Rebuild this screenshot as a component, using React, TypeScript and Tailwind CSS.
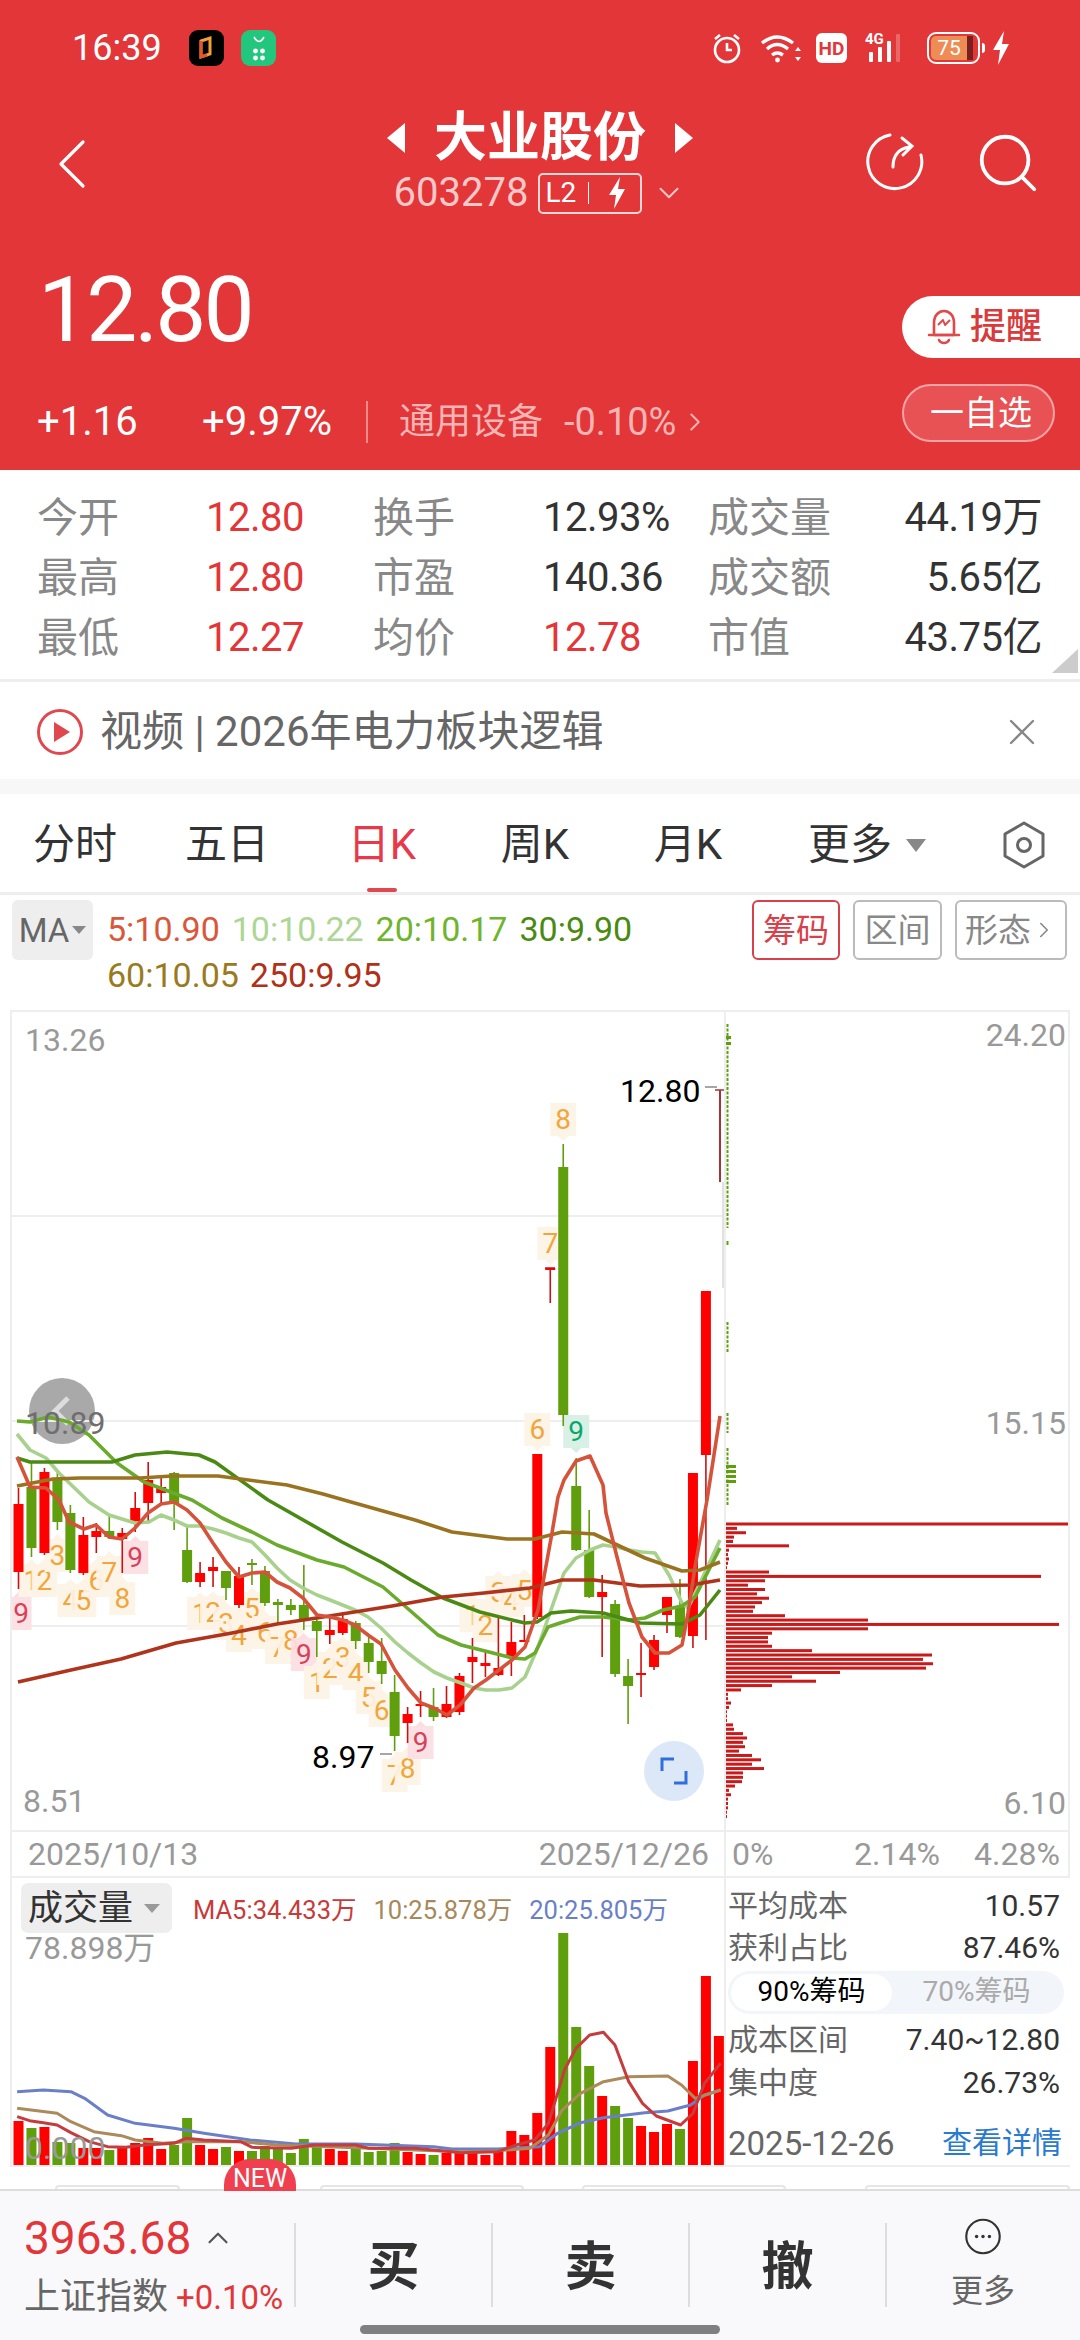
import { ChevronRight, ChevronDown, ChevronUp, X, Search } from 'lucide-react'

const FONT = "font-['Roboto','Noto_Sans_CJK_SC',sans-serif]"

// [up?, wickTop, bodyTop, bodyBottom, wickBottom]
const CANDLES: [number, number, number, number, number][] = [
  [1, 1488, 1504, 1572, 1589], [0, 1463, 1487, 1548, 1557], [1, 1468, 1472, 1553, 1555], [0, 1470, 1478, 1522, 1530],
  [0, 1505, 1513, 1570, 1573], [1, 1517, 1535, 1573, 1575], [1, 1523, 1531, 1537, 1553], [0, 1515, 1531, 1537, 1539],
  [1, 1528, 1533, 1539, 1573], [1, 1492, 1508, 1523, 1532], [1, 1462, 1480, 1503, 1522], [1, 1478, 1487, 1493, 1504],
  [0, 1472, 1473, 1503, 1530], [0, 1527, 1550, 1582, 1583], [1, 1562, 1573, 1582, 1587], [1, 1557, 1567, 1571, 1587],
  [0, 1571, 1571, 1588, 1600], [1, 1567, 1576, 1605, 1608], [0, 1559, 1563, 1565, 1585], [0, 1566, 1571, 1603, 1606],
  [0, 1599, 1602, 1605, 1623], [0, 1599, 1605, 1610, 1615], [0, 1565, 1605, 1621, 1630], [0, 1615, 1621, 1631, 1657],
  [1, 1618, 1630, 1635, 1644], [1, 1612, 1619, 1633, 1635], [0, 1621, 1623, 1641, 1649], [0, 1635, 1643, 1662, 1673],
  [0, 1638, 1661, 1674, 1684], [0, 1675, 1692, 1736, 1751], [1, 1707, 1714, 1723, 1743], [1, 1691, 1704, 1706, 1717],
  [0, 1688, 1707, 1717, 1721], [1, 1686, 1704, 1717, 1718], [1, 1673, 1676, 1712, 1715], [1, 1638, 1657, 1662, 1683],
  [1, 1652, 1663, 1666, 1677], [1, 1617, 1668, 1675, 1676], [1, 1622, 1642, 1657, 1676], [1, 1615, 1640, 1642, 1642],
  [1, 1454, 1454, 1617, 1619], [1, 1268, 1268, 1270, 1303], [0, 1144, 1167, 1415, 1426], [0, 1458, 1486, 1550, 1551],
  [0, 1510, 1550, 1597, 1598], [1, 1575, 1592, 1597, 1657], [0, 1600, 1604, 1674, 1677], [0, 1659, 1676, 1686, 1724],
  [1, 1643, 1673, 1675, 1697], [1, 1635, 1640, 1667, 1670], [1, 1597, 1597, 1615, 1633], [0, 1579, 1607, 1637, 1638],
  [1, 1473, 1473, 1636, 1648], [1, 1291, 1291, 1455, 1640],
]

const MA_LINES: { color: string; pts: number[][] }[] = [
  { color: '#a9d18e', pts: [[15,1434],[28,1450],[44,1458],[57,1473],[87,1502],[107,1515],[133,1523],[147,1522],[159,1515],[172,1520],[185,1526],[198,1526],[211,1529],[224,1533],[237,1538],[250,1542],[263,1555],[275,1568],[288,1580],[301,1588],[315,1595],[328,1600],[353,1610],[366,1617],[379,1628],[393,1642],[406,1653],[419,1663],[432,1672],[445,1678],[459,1683],[472,1688],[484,1690],[497,1690],[510,1688],[523,1677],[536,1647],[550,1607],[562,1573],[574,1558],[588,1550],[601,1545],[614,1547],[627,1550],[640,1552],[653,1553],[667,1575],[680,1603],[686,1608],[698,1583],[718,1540]] },
  { color: '#6aab2e', pts: [[15,1421],[28,1422],[46,1417],[67,1422],[87,1435],[115,1463],[142,1482],[190,1500],[220,1518],[250,1532],[275,1545],[315,1560],[342,1567],[381,1587],[404,1607],[436,1635],[459,1645],[487,1652],[510,1658],[523,1659],[533,1653],[546,1627],[558,1623],[578,1617],[601,1617],[627,1620],[643,1618],[661,1610],[680,1606],[693,1597],[718,1548]] },
  { color: '#4a8a14', pts: [[15,1458],[28,1462],[110,1462],[133,1455],[165,1452],[197,1455],[213,1462],[266,1500],[340,1542],[381,1563],[409,1580],[441,1598],[478,1612],[510,1620],[523,1623],[535,1622],[549,1613],[569,1611],[601,1613],[638,1623],[680,1624],[698,1615],[718,1590]] },
  { color: '#9a7320', pts: [[15,1486],[51,1479],[78,1478],[138,1478],[170,1476],[216,1476],[285,1485],[321,1494],[349,1502],[413,1520],[450,1532],[505,1539],[533,1539],[560,1532],[592,1534],[611,1543],[643,1558],[680,1571],[698,1570],[718,1562]] },
  { color: '#b0341c', pts: [[16,1682],[69,1670],[119,1659],[174,1643],[230,1633],[275,1624],[321,1617],[390,1606],[441,1597],[482,1593],[528,1588],[560,1580],[592,1580],[638,1586],[689,1585],[718,1580]] },
  { color: '#d5533b', pts: [[15,1457],[28,1487],[44,1488],[57,1500],[67,1522],[82,1529],[94,1525],[107,1537],[120,1539],[133,1528],[146,1513],[159,1504],[172,1502],[185,1510],[198,1523],[211,1543],[224,1562],[237,1577],[250,1573],[263,1572],[275,1582],[288,1588],[301,1598],[315,1615],[328,1617],[341,1620],[353,1625],[366,1635],[379,1644],[393,1670],[406,1688],[419,1703],[432,1708],[445,1715],[458,1705],[472,1688],[484,1680],[497,1670],[510,1660],[523,1647],[536,1610],[550,1533],[556,1497],[562,1480],[574,1461],[588,1456],[601,1485],[604,1513],[615,1557],[627,1603],[640,1637],[653,1653],[667,1653],[680,1645],[686,1613],[693,1567],[705,1500],[718,1416]] },
]

// [candle index, digit, centre y, kind]
const MARKS: [number, number, number, string][] = [
  [0,9,1613,'p'],[1,1,1580,'o'],[2,2,1580,'o'],[3,3,1555,'o'],[4,4,1600,'o'],[5,5,1600,'o'],[6,6,1580,'o'],[7,7,1572,'o'],[8,8,1598,'o'],[9,9,1557,'p'],
  [14,1,1613,'o'],[15,2,1612,'o'],[16,3,1623,'o'],[17,4,1635,'o'],[18,5,1608,'o'],[19,6,1632,'o'],[20,7,1647,'o'],[21,8,1640,'o'],[22,9,1654,'p'],
  [23,1,1682,'o'],[24,2,1668,'o'],[25,3,1657,'o'],[26,4,1673,'o'],[27,5,1697,'o'],[28,6,1710,'o'],[29,7,1775,'o'],[30,8,1768,'o'],[31,9,1742,'p'],
  [35,1,1615,'o'],[36,2,1625,'o'],[37,3,1592,'o'],[38,4,1600,'o'],[39,5,1590,'o'],[40,6,1429,'o'],[41,7,1243,'o'],[42,8,1119,'o'],[43,9,1431,'g'],
]

const MARK_STYLE: Record<string, [string, string]> = {
  o: ['#fdf3e6', '#f0a63c'],
  p: ['#fbdde2', '#d9405a'],
  g: ['#d6efe5', '#0aa868'],
}

const CHIP_WIDTHS = [345,11,20,8,7,63,3,2,3,2,1,43,315,39,22,39,31,43,36,29,27,59,142,333,142,46,42,42,46,86,206,197,207,200,114,66,90,46,15,2,2,5,3,1,1,1,7,8,17,21,17,19,13,26,35,26,38,17,17,16,9,3,5,2,2,2,1,1]

// [up?, top y]
const VOLUMES: [number, number][] = [
  [1,2121],[0,2128],[1,2127],[0,2142],[0,2143],[1,2148],[1,2148],[0,2150],[1,2148],[1,2143],[1,2138],[1,2149],[0,2145],[0,2118],
  [1,2145],[1,2149],[0,2147],[1,2151],[0,2151],[0,2146],[0,2149],[0,2153],[0,2139],[0,2146],[1,2149],[1,2151],[0,2148],[0,2152],
  [0,2151],[0,2143],[1,2152],[1,2154],[0,2155],[1,2153],[1,2152],[1,2152],[1,2155],[1,2151],[1,2131],[1,2135],[1,2113],[1,2047],
  [0,1933],[0,2027],[0,2066],[1,2096],[0,2106],[0,2118],[1,2126],[1,2132],[1,2124],[0,2129],[1,2061],[1,1976],[1,2036],
]

const VOL_LINES: { color: string; pts: number[][] }[] = [
  { color: '#6a7fc8', pts: [[33,755],[90,750],[150,755],[180,775],[230,825],[290,850],[375,865],[440,880],[540,900],[640,912],[770,912],[940,920],[980,927],[1080,927],[1170,920],[1210,880],[1260,848],[1310,833],[1400,818],[1450,813],[1500,795],[1530,765],[1565,750]] },
  { color: '#ab8a5c', pts: [[33,805],[120,820],[150,845],[200,875],[260,887],[290,900],[350,910],[400,905],[520,905],[600,915],[800,925],[1000,935],[1080,932],[1150,925],[1190,885],[1220,810],[1260,760],[1310,725],[1365,710],[1450,708],[1480,735],[1510,775],[1565,750]] },
  { color: '#c63c3c', pts: [[33,830],[60,842],[90,848],[120,855],[150,878],[190,905],[230,920],[270,922],[310,915],[375,910],[400,895],[440,900],[520,905],[545,922],[630,925],[680,915],[770,915],[800,925],[900,925],[1000,938],[1080,935],[1120,915],[1160,900],[1190,850],[1210,760],[1225,690],[1250,625],[1280,585],[1310,577],[1335,615],[1365,725],[1395,790],[1425,828],[1478,855],[1505,820],[1530,730],[1565,670]] },
]

const STATS = [
  ['今开', '12.80', '换手', '12.93%', '成交量', '44.19万'],
  ['最高', '12.80', '市盈', '140.36', '成交额', '5.65亿'],
  ['最低', '12.27', '均价', '12.78', '市值', '43.75亿'],
]

const cx = (i: number) => 16.5 + i * 12.97

function StatusBar() {
  return (
    <div className="flex h-[96px] items-center pl-[72px] pr-[70px]">
      <span className="w-[90px] text-[36px] leading-none text-white">16:39</span>
      <div className="ml-[27px] flex h-[36px] w-[35px] items-center justify-center rounded-[9px] bg-black">
        <svg width="20" height="26" viewBox="0 0 20 26">
          <path d="M4 6 L13 3 V19 L4 22 Z" fill="none" stroke="#f2a13a" strokeWidth="3" />
          <path d="M4 6 V22 L10 20" fill="none" stroke="#e6562a" strokeWidth="3" />
        </svg>
      </div>
      <div className="ml-[17px] flex h-[36px] w-[35px] items-center justify-center rounded-[9px] bg-[#22c67c]">
        <svg width="20" height="28" viewBox="0 0 20 28" fill="#fff">
          <path d="M5 3 Q10 12 15 3" fill="none" stroke="#fff" strokeWidth="1.6" />
          <circle cx="6.5" cy="17" r="2.4" />
          <circle cx="13.5" cy="17" r="2.4" />
          <circle cx="6.5" cy="24" r="2.4" />
          <circle cx="13.5" cy="24" r="2.4" />
        </svg>
      </div>
      <div className="ml-auto flex items-center">
        <svg width="32" height="32" viewBox="0 0 32 32" fill="none" stroke="#fff" strokeWidth="2.6">
          <circle cx="16" cy="18" r="12" />
          <path d="M16 11 V18 H21 M4 7 L9 3 M28 7 L23 3" />
        </svg>
        <svg className="ml-[17px]" width="42" height="32" viewBox="0 0 42 32" fill="none" stroke="#fff" strokeWidth="3.4">
          <path d="M2 11 Q17 -1 33 11 M7 17 Q17 8 28 17 M12 23 Q17 19 23 23" />
          <circle cx="17.5" cy="28" r="2.4" fill="#fff" stroke="none" />
          <path d="M38 15 L35 19 H41 Z M38 29 L35 25 H41 Z" fill="#fff" stroke="none" />
        </svg>
        <div className="ml-[14px] flex h-[30px] w-[31px] items-center justify-center rounded-[6px] bg-white text-[19px] font-bold leading-none text-[#e23638]">
          HD
        </div>
        <div className="relative ml-[18px] h-[32px] w-[44px]">
          <span className="absolute left-0 top-0 text-[15px] font-bold leading-none text-white">4G</span>
          <svg className="absolute left-0 top-0" width="44" height="32" viewBox="0 0 44 32" fill="#fff">
            <rect x="4" y="20" width="4" height="10" rx="1" />
            <rect x="13" y="15" width="4" height="15" rx="1" />
            <rect x="22" y="9" width="4" height="21" rx="1" />
            <rect x="31" y="2" width="4" height="28" rx="1" opacity="0.25" />
          </svg>
        </div>
        <div className="ml-[18px] flex h-[32px] w-[53px] items-stretch overflow-hidden rounded-[9px] border-2 border-white p-[2px]">
          <div className="flex w-[36px] items-center justify-center rounded-l-[5px] bg-[#ee8c55] text-[21px] leading-none text-white">75</div>
          <div className="w-[6px] bg-[#7a1f1f]" />
        </div>
        <div className="ml-[2px] h-[10px] w-[3px] rounded-r bg-white" />
        <svg className="ml-[7px]" width="18" height="34" viewBox="0 0 18 34" fill="#fff">
          <path d="M12 0 L1 19 H8 L6 34 L17 13 H10 Z" />
        </svg>
      </div>
    </div>
  )
}

function Header() {
  return (
    <div className="h-[470px] bg-[#e23638]">
      <StatusBar />
      <div className="grid h-[129px] grid-cols-[340px_400px_340px]">
        <div className="pl-[57px] pt-[43px]">
          <svg width="30" height="50" viewBox="0 0 30 50" fill="none" stroke="#fff" strokeWidth="3.2" strokeLinecap="round" strokeLinejoin="round">
            <path d="M26 3 L4 25 L26 47" />
          </svg>
        </div>
        <div className="flex flex-col items-center pt-[14px]">
          <div className="flex h-[56px] items-center gap-[29px]">
            <div className="h-0 w-0 border-y-[15px] border-r-[18px] border-y-transparent border-r-white" />
            <span className="text-[53px] font-bold leading-none text-white">大业股份</span>
            <div className="h-0 w-0 border-y-[15px] border-l-[18px] border-y-transparent border-l-white" />
          </div>
          <div className="mt-[6px] flex h-[42px] items-center">
            <span className="text-[40px] leading-none text-[#fbc8c8]">603278</span>
            <div className="ml-[10px] flex h-[41px] w-[104px] items-center rounded-[5px] border-2 border-[#fbd8d8] pl-[5px]">
              <span className="text-[28px] leading-none text-white">L2</span>
              <div className="ml-[12px] h-[22px] w-px bg-white" />
              <svg className="ml-[18px]" width="20" height="32" viewBox="0 0 20 32" fill="#fff">
                <path d="M13 0 L2 18 H9 L7 32 L18 12 H11 Z" />
              </svg>
            </div>
            <ChevronDown size={34} strokeWidth={1.4} className="ml-[10px] text-[#fbc8c8]" />
          </div>
        </div>
        <div className="flex items-start pl-[126px] pt-[36px]">
          <svg width="60" height="60" viewBox="0 0 60 60" fill="none" stroke="#fff" strokeWidth="3" strokeLinecap="round">
            <path d="M24 3 A27 27 0 1 0 55 23" />
            <path d="M27 35 C27 24 32 17 43 15 M36 6 L46 14 L37 23" />
          </svg>
          <Search size={70} strokeWidth={1.3} className="ml-[47px] -mt-[4px] text-white" />
        </div>
      </div>
      <div className="flex justify-between">
        <div className="pl-[38px] pt-[40px]">
          <div className="h-[90px] text-[91px] leading-[90px] tracking-[-3px] text-white">12.80</div>
          <div className="mt-[42px] flex h-[50px] items-center text-[40px] leading-none">
            <span className="-ml-[1px] w-[165px] text-white">+1.16</span>
            <span className="w-[164px] text-white">+9.97%</span>
            <div className="h-[42px] w-[2px] bg-[#ee8a8a]" />
            <span className="ml-[31px] text-[36px] text-[#f6b4b4]">通用设备</span>
            <span className="ml-[21px] text-[38px] text-[#f6b4b4]">-0.10%</span>
            <ChevronRight size={30} strokeWidth={1.6} className="ml-[4px] text-[#f6b4b4]" />
          </div>
        </div>
        <div className="flex flex-col items-end pt-[71px]">
          <div className="flex h-[62px] w-[178px] items-center rounded-l-[31px] bg-white pl-[24px]">
            <svg width="36" height="38" viewBox="0 0 36 38" fill="none" stroke="#e0484a" strokeWidth="2.6" strokeLinejoin="round">
              <path d="M8 27 V15 C8 -1 28 -1 28 15 V27 Z" />
              <path d="M3 27 H33 M13 32 C15 36 21 36 23 32" strokeLinecap="round" />
              <path d="M12 17 L17 12 L19 17 L24 12" strokeWidth="2" />
            </svg>
            <span className="ml-[8px] text-[36px] font-medium leading-none text-[#d93a3c]">提醒</span>
          </div>
          <div className="mr-[25px] mt-[26px] flex h-[58px] w-[153px] items-center rounded-full border-2 border-[#f3a5a5] bg-[#e85254] pl-[26px] text-[34px] leading-none text-white">
            一自选
          </div>
        </div>
      </div>
    </div>
  )
}

function StatsGrid() {
  return (
    <div className="relative h-[212px] border-b-[3px] border-[#eeeeee] bg-white pl-[37px] pt-[18px]">
      {STATS.map((row, i) => (
        <div key={i} className="grid h-[60px] grid-cols-[169px_167px_170px_165px_334px] items-center text-[40px] leading-none tracking-[-0.5px]">
          <span className="text-[41px] tracking-normal text-[#888888]">{row[0]}</span>
          <span className="text-[#e23638]">{row[1]}</span>
          <span className="text-[41px] tracking-normal text-[#888888]">{row[2]}</span>
          <span className={i === 2 ? 'text-[#e23638]' : 'text-[#333333]'}>{row[3]}</span>
          <div className="flex items-center justify-between">
            <span className="text-[41px] tracking-normal text-[#888888]">{row[4]}</span>
            <span className="text-[#333333]">{row[5]}</span>
          </div>
        </div>
      ))}
      <div className="absolute bottom-[6px] right-[2px] h-0 w-0 border-b-[24px] border-l-[26px] border-b-[#cccccc] border-l-transparent" />
    </div>
  )
}

function NewsRow() {
  return (
    <div className="border-b-[15px] border-[#f7f7f7] bg-white">
      <div className="flex h-[97px] items-center pl-[37px] pr-[36px] pt-[3px]">
        <svg width="46" height="46" viewBox="0 0 46 46">
          <circle cx="23" cy="23" r="21.5" fill="none" stroke="#e0484f" strokeWidth="3" />
          <path d="M17 13 L33 23 L17 33 Z" fill="#e0484f" />
        </svg>
        <span className="ml-[17px] text-[42px] leading-none text-[#666666]">视频 | 2026年电力板块逻辑</span>
        <X size={44} strokeWidth={1.3} className="ml-auto text-[#888888]" />
      </div>
    </div>
  )
}

function Tabs() {
  const tabs = [
    { label: '分时', w: 'w-[150px]' },
    { label: '五日', w: 'w-[154px]' },
    { label: '日K', w: 'w-[156px]', active: true },
    { label: '周K', w: 'w-[150px]' },
    { label: '月K', w: 'w-[156px]' },
  ]
  return (
    <div className="flex h-[101px] items-center border-b-[3px] border-[#eeeeee] bg-white pt-[4px] text-[42px] leading-none text-[#333333]">
      {tabs.map((t) => (
        <div key={t.label} className={`relative flex h-full items-center justify-center ${t.w} ${t.active ? 'text-[#e8394a]' : ''}`}>
          {t.label}
          {t.active && <div className="absolute bottom-0 left-[63px] h-[4px] w-[30px] rounded-sm bg-[#e0484f]" />}
        </div>
      ))}
      <div className="ml-[42px] flex items-center">
        更多
        <div className="ml-[14px] h-0 w-0 border-x-[10px] border-t-[13px] border-x-transparent border-t-[#888888]" />
      </div>
      <svg className="ml-[76px]" width="44" height="48" viewBox="0 0 44 48" fill="none" stroke="#666666" strokeWidth="3" strokeLinejoin="round">
        <path d="M22 2 L41 13 V35 L22 46 L3 35 V13 Z" />
        <circle cx="22" cy="24" r="6.5" />
      </svg>
    </div>
  )
}

function MaRow() {
  return (
    <div className="flex h-[115px] bg-white pl-[12px] pr-[13px] pt-[5px]">
      <div className="flex h-[60px] w-[81px] items-center justify-center rounded-[6px] bg-[#eeeeee] text-[33px] leading-none text-[#666666]">
        MA
        <div className="ml-[3px] h-0 w-0 border-x-[7px] border-t-[8px] border-x-transparent border-t-[#888888]" />
      </div>
      <div className="ml-[14px] flex flex-col pt-[6px] text-[34px] leading-none">
        <div className="flex h-[46px] items-center gap-[12px]">
          <span className="text-[#d9583a]">5:10.90</span>
          <span className="text-[#add695]">10:10.22</span>
          <span className="text-[#6fb52c]">20:10.17</span>
          <span className="text-[#4a8a12]">30:9.90</span>
        </div>
        <div className="flex h-[46px] items-center gap-[11px]">
          <span className="text-[#9a7a20]">60:10.05</span>
          <span className="text-[#b03018]">250:9.95</span>
        </div>
      </div>
      <div className="ml-auto flex h-[60px] gap-[13px] text-[33px] leading-none text-[#888888]">
        <div className="flex w-[88px] items-center justify-center rounded-[6px] border-2 border-[#d9414a] text-[#d9414a]">筹码</div>
        <div className="flex w-[89px] items-center justify-center rounded-[6px] border-2 border-[#bbbbbb]">区间</div>
        <div className="flex w-[112px] items-center justify-center rounded-[6px] border-2 border-[#bbbbbb]">
          形态
          <ChevronRight size={26} strokeWidth={1.5} />
        </div>
      </div>
    </div>
  )
}

function KLine() {
  return (
    <svg width="715" height="820" viewBox="10 1010 715 820" className="block">
      <circle cx="60" cy="1411" r="33" fill="#a9a9a9" />
      <path d="M66 1398 L53 1411 L66 1424" fill="none" stroke="#dddddd" strokeWidth="5" />
      {[1216, 1421, 1626].map((y) => (
        <line key={y} x1="10" x2="725" y1={y} y2={y} stroke="#eeeeee" strokeWidth="2" />
      ))}
      {MARKS.map(([i, d, y, kind], n) => {
        const x = cx(i)
        const [bg, fg] = MARK_STYLE[kind]
        const down = y < 1440
        return (
          <g key={n}>
            <rect x={x - 13} y={y - 16} width="26" height="33" fill={bg} fillOpacity="0.92" />
            <path d={down ? `M${x - 5} ${y + 17} L${x} ${y + 22} L${x + 5} ${y + 17}Z` : `M${x - 5} ${y - 16} L${x} ${y - 21} L${x + 5} ${y - 16}Z`} fill={bg} />
            <text x={Math.max(x, 19)} y={y + 10} textAnchor="middle" fontSize="28" fontFamily="Roboto" fill={fg}>{d}</text>
          </g>
        )
      })}
      {CANDLES.map(([up, wt, bt, bb, wb], i) => {
        const x = cx(i)
        const color = up ? '#ff0000' : '#5f9e0c'
        return (
          <g key={i}>
            <line x1={x} x2={x} y1={wt} y2={wb} stroke={up ? '#cc1010' : color} strokeWidth="1.6" />
            <rect x={x - 5} y={bt} width="10" height={bb - bt} fill={color} />
          </g>
        )
      })}
      {/* last bar: limit-up day, a thin line only */}
      <line x1="718" x2="718" y1="1090" y2="1182" stroke="#a83232" strokeWidth="2" />
      <line x1="713" x2="723" y1="1090" y2="1090" stroke="#a83232" strokeWidth="1.5" />
      <line x1="543" x2="553" y1="1268" y2="1268" stroke="#cc1010" strokeWidth="1.5" />
      <line x1="703" x2="715" y1="1087" y2="1087" stroke="#888888" strokeWidth="1.5" />
      <line x1="378" x2="390" y1="1754" y2="1754" stroke="#888888" strokeWidth="1.5" />
      {MA_LINES.map((l) => (
        <polyline key={l.color} points={l.pts.map((p) => p.join(',')).join(' ')} fill="none" stroke={l.color} strokeWidth="3.6" strokeLinejoin="round" />
      ))}
      <rect x="720" y="1182" width="5" height="106" fill="#e2e2e2" />
    </svg>
  )
}

function Chips() {
  return (
    <svg width="344" height="820" viewBox="726 1010 344 820" className="block">
      <line x1="727.5" x2="727.5" y1="1024" y2="1228" stroke="#5f9e0c" strokeWidth="2" strokeDasharray="3 1.5" />
      <line x1="727.5" x2="727.5" y1="1241" y2="1245" stroke="#5f9e0c" strokeWidth="2" />
      <line x1="727.5" x2="727.5" y1="1322" y2="1353" stroke="#5f9e0c" strokeWidth="2" strokeDasharray="3 1.5" />
      <line x1="727.5" x2="727.5" y1="1413" y2="1433" stroke="#5f9e0c" strokeWidth="2" strokeDasharray="3 1.5" />
      <line x1="727.5" x2="727.5" y1="1448" y2="1505" stroke="#5f9e0c" strokeWidth="2" strokeDasharray="3 1.5" />
      {[1036, 1042, 1465, 1470, 1475, 1480].map((y, i) => (
        <rect key={y} x="726" y={y} width={i < 2 ? 5 : 10} height="3" fill="#5f9e0c" />
      ))}
      {CHIP_WIDTHS.map((w, i) => (
        <rect key={i} x="726" y={1522.5 + i * 4.367} width={w} height="3" fill="#c81a1a" />
      ))}
    </svg>
  )
}

function Volume() {
  return (
    <svg width="712" height="287" viewBox="10 1878 712 287" className="block">
      {VOLUMES.map(([up, top], i) => (
        <rect key={i} x={cx(i) - 5} y={top} width="10" height={2165 - top} fill={up ? '#ff0000' : '#5f9e0c'} />
      ))}
      {VOL_LINES.map((l) => (
        <polyline
          key={l.color}
          points={l.pts.map(([x, y]) => `${x / 2.178},${1840 + y / 3}`).join(' ')}
          fill="none"
          stroke={l.color}
          strokeWidth="3"
          strokeLinejoin="round"
        />
      ))}
    </svg>
  )
}

function ChartArea() {
  const axis = 'text-[32px] leading-none text-[#999999]'
  return (
    <div className="bg-white pl-[10px] pr-[10px]">
      <div className="flex h-[820px] border-l-2 border-r-2 border-t-2 border-[#eeeeee]">
        <div className="relative w-[714px] overflow-hidden border-r-2 border-[#eeeeee]">
          <div className="-mt-[2px]">
            <KLine />
          </div>
          <span className={`absolute left-[13px] top-[12px] ${axis}`}>13.26</span>
          <span className="absolute left-[13px] top-[395px] text-[32px] leading-none text-[#6e6e6e]">10.89</span>
          <span className={`absolute left-[11px] top-[773px] ${axis}`}>8.51</span>
          <span className="absolute left-[608px] top-[63px] text-[32px] leading-none text-black">12.80</span>
          <span className="absolute left-[300px] top-[729px] text-[32px] leading-none text-black">8.97</span>
          <div className="absolute left-[632px] top-[729px] flex h-[60px] w-[60px] items-center justify-center rounded-full bg-[#dce8f8]">
            <svg width="28" height="28" viewBox="0 0 28 28" fill="none" stroke="#2f6fdc" strokeWidth="3">
              <path d="M2 14 V2 H14 M14 26 H26 V14" />
            </svg>
          </div>
        </div>
        <div className="relative flex-1 overflow-hidden">
          <div className="-mt-[2px]">
            <Chips />
          </div>
          <span className={`absolute right-[2px] top-[7px] ${axis}`}>24.20</span>
          <span className={`absolute right-[2px] top-[395px] ${axis}`}>15.15</span>
          <span className={`absolute right-[2px] top-[775px] ${axis}`}>6.10</span>
        </div>
      </div>
      <div className="flex h-[48px] border-2 border-[#eeeeee] text-[32px] leading-none text-[#999999]">
        <div className="flex w-[714px] items-center justify-between border-r-2 border-[#eeeeee] pl-[16px] pr-[15px]">
          <span>2025/10/13</span>
          <span>2025/12/26</span>
        </div>
        <div className="grid flex-1 grid-cols-[122px_120px_1fr] items-center pl-[6px]">
          <span>0%</span>
          <span>2.14%</span>
          <span>4.28%</span>
        </div>
      </div>
      <div className="flex h-[289px] border-b-2 border-l-2 border-r-0 border-[#eeeeee]">
        <div className="relative w-[714px] border-r-2 border-[#eeeeee]">
          <Volume />
          <div className="absolute left-[9px] top-[5px] flex h-[50px] w-[151px] items-center rounded-[7px] bg-[#eeeeee] pl-[7px] text-[35px] leading-none text-[#333333]">
            成交量
            <div className="ml-[11px] h-0 w-0 border-x-[8px] border-t-[9px] border-x-transparent border-t-[#999999]" />
          </div>
          <div className="absolute left-[181px] top-[20px] flex gap-[17px] text-[25.5px] leading-none">
            <span className="text-[#c83a3a]">MA5:34.433万</span>
            <span className="text-[#a8885a]">10:25.878万</span>
            <span className="text-[#6a7fc8]">20:25.805万</span>
          </div>
          <span className={`absolute left-[13px] top-[54px] ${axis}`}>78.898万</span>
          <span className={`absolute left-[13px] top-[254px] ${axis}`}>0.000</span>
        </div>
        <div className="flex flex-1 flex-col px-[2px] text-[30px] leading-none text-[#333333]">
          <div className="mt-[6px] flex h-[44px] items-center justify-between pr-[8px]">
            <span className="text-[#666666]">平均成本</span>
            <span>10.57</span>
          </div>
          <div className="-mt-[1px] flex h-[44px] items-center justify-between pr-[8px]">
            <span className="text-[#666666]">获利占比</span>
            <span>87.46%</span>
          </div>
          <div className="mt-[1px] flex h-[44px] w-[336px] items-center rounded-full bg-[#f2f5f9] p-[3px] text-[28px]">
            <div className="flex h-full w-[161px] items-center justify-center rounded-full bg-white text-black">90%筹码</div>
            <div className="flex flex-1 items-center justify-center text-[#aaaaaa]">70%筹码</div>
          </div>
          <div className="mt-[4px] flex h-[44px] items-center justify-between pr-[8px]">
            <span className="text-[#666666]">成本区间</span>
            <span>7.40~12.80</span>
          </div>
          <div className="flex h-[44px] items-center justify-between pr-[8px]">
            <span className="text-[#666666]">集中度</span>
            <span>26.73%</span>
          </div>
          <div className="mt-[17px] flex h-[44px] items-center justify-between pr-[6px]">
            <span className="text-[33px] text-[#666666]">2025-12-26</span>
            <span className="text-[#2a7ad0]">查看详情</span>
          </div>
        </div>
      </div>
    </div>
  )
}

function BottomBar() {
  const actions = ['买', '卖', '撤']
  return (
    <div className="relative h-[151px] border-t-2 border-[#dddddd] bg-[#f9f9fb]">
      {/* new-feature badge sits on the bar's top edge */}
      <div className="absolute -top-[32px] left-[224px] flex h-[32px] w-[72px] items-center justify-center rounded-t-[26px] bg-[#f0404f] pt-[6px] text-[25px] leading-none text-white">
        NEW
      </div>
      <div className="flex h-[120px] items-start pt-[32px]">
        <div className="w-[294px] pl-[24px]">
          <div className="-mt-[8px] flex items-center text-[46px] leading-none text-[#e23638]">
            3963.68
            <ChevronUp size={34} strokeWidth={1.5} className="ml-[10px] text-[#555555]" />
          </div>
          <div className="mt-[18px] flex items-center">
            <span className="text-[36px] leading-none text-[#666666]">上证指数</span>
            <span className="ml-[8px] text-[33px] leading-none text-[#e23638]">+0.10%</span>
          </div>
        </div>
        {actions.map((a) => (
          <div key={a} className="flex h-[84px] w-[197px] items-center justify-center border-l-2 border-[#dddddd] pt-[5px] text-[52px] font-bold leading-none text-[#333333]">
            {a}
          </div>
        ))}
        <div className="flex h-[84px] w-[194px] flex-col items-center border-l-2 border-[#dddddd]">
          <svg className="-mt-[5px]" width="50" height="52" viewBox="0 0 50 52">
            <circle cx="25" cy="26" r="23.5" fill="none" stroke="#333333" strokeWidth="3" />
            <circle cx="16" cy="26" r="2.4" fill="#333333" />
            <circle cx="25" cy="26" r="2.4" fill="#333333" />
            <circle cx="34" cy="26" r="2.4" fill="#333333" />
          </svg>
          <span className="mt-[20px] text-[32px] leading-none text-[#666666]">更多</span>
        </div>
      </div>
      <div className="mx-auto mt-[14px] h-[9px] w-[360px] rounded-full bg-[#808080]" />
    </div>
  )
}

export default function App() {
  return (
    <div className={`flex h-[2340px] w-[1080px] flex-col overflow-hidden bg-white ${FONT}`}>
      <Header />
      <StatsGrid />
      <NewsRow />
      <Tabs />
      <MaRow />
      <ChartArea />
      <div className="relative flex-1">
        <div className="absolute bottom-0 left-[55px] h-[4px] w-[125px] rounded-t-[12px] border-x-2 border-t-2 border-[#e6e6e6]" />
        <div className="absolute bottom-0 left-[320px] h-[4px] w-[204px] rounded-t-[12px] border-x-2 border-t-2 border-[#e6e6e6]" />
        <div className="absolute bottom-0 left-[582px] h-[4px] w-[204px] rounded-t-[12px] border-x-2 border-t-2 border-[#e6e6e6]" />
        <div className="absolute bottom-0 left-[865px] h-[4px] w-[205px] rounded-t-[12px] border-x-2 border-t-2 border-[#e6e6e6]" />
      </div>
      <BottomBar />
    </div>
  )
}
